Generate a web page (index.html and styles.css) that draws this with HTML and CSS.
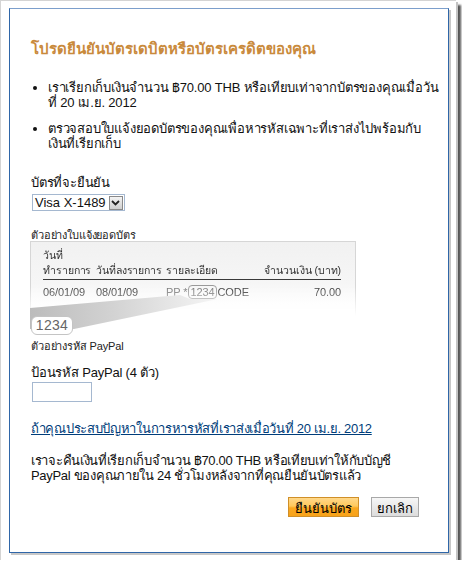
FILE: index.html
```html
<!DOCTYPE html>
<html>
<head>
<meta charset="utf-8">
<link rel="stylesheet" href="styles.css">
</head>
<body>
<div class="frame">
  <div class="card">
    <h1 class="title">โปรดยืนยันบัตรเดบิตหรือบัตรเครดิตของคุณ</h1>
    <ul class="bullets">
      <li>เราเรียกเก็บเงินจำนวน ฿70.00 THB หรือเทียบเท่าจากบัตรของคุณเมื่อวัน<br>ที่ 20 เม.ย. 2012</li>
      <li>ตรวจสอบใบแจ้งยอดบัตรของคุณเพื่อหารหัสเฉพาะที่เราส่งไปพร้อมกับ<br>เงินที่เรียกเก็บ</li>
    </ul>
    <div class="field card-field">
      <label class="label">บัตรที่จะยืนยัน</label>
      <div class="select">
        <span class="select-text">Visa X-1489</span>
        <span class="select-btn">
          <svg width="9" height="6" viewBox="0 0 9 6"><path d="M1 1 L4.5 4.5 L8 1" fill="none" stroke="#222" stroke-width="1.8"/></svg>
        </span>
      </div>
    </div>
    <div class="sample">
      <div class="small">ตัวอย่างใบแจ้งยอดบัตร</div>
      <div class="callout">
        <div class="statement">
          <div class="st-head">
            <div class="c1">วันที่<br>ทำรายการ</div>
            <div class="c2">วันที่ลงรายการ</div>
            <div class="c3">รายละเอียด</div>
            <div class="c4">จำนวนเงิน (บาท)</div>
          </div>
          <div class="st-row">
            <div class="c1">06/01/09</div>
            <div class="c2">08/01/09</div>
            <div class="c3"><span class="pp">PP *</span><span class="code-sm">1234</span><span class="code-word">CODE</span></div>
            <div class="c4">70.00</div>
          </div>
        </div>
        <svg class="wedge" width="200" height="95" viewBox="0 0 200 95">
          <defs>
            <linearGradient id="wg" x1="0" y1="0" x2="1" y2="0">
              <stop offset="0" stop-color="#bcbcbc"/>
              <stop offset="0.45" stop-color="#d3d3d3"/>
              <stop offset="1" stop-color="#f6f6f6"/>
            </linearGradient>
          </defs>
          <polygon points="0,67 150,54 160,58 188,58 44,88 0,88" fill="url(#wg)"/>
        </svg>
        <div class="code-lg">1234</div>
      </div>
      <div class="small code-caption">ตัวอย่างรหัส PayPal</div>
    </div>
    <div class="field code-field">
      <label class="label">ป้อนรหัส PayPal (4 ตัว)</label>
      <div class="input"></div>
    </div>
    <a class="link" href="#">ถ้าคุณประสบปัญหาในการหารหัสที่เราส่งเมื่อวันที่ 20 เม.ย. 2012 </a>
    <p class="refund">เราจะคืนเงินที่เรียกเก็บจำนวน ฿70.00 THB หรือเทียบเท่าให้กับบัญชี<br>PayPal ของคุณภายใน 24 ชั่วโมงหลังจากที่คุณยืนยันบัตรแล้ว</p>
    <div class="actions">
      <button class="btn primary">ยืนยันบัตร</button>
      <button class="btn">ยกเลิก</button>
    </div>
  </div>
</div>
</body>
</html>
```
FILE: styles.css
```css
html, body { margin: 0; padding: 0; background: #fff; }
body { font-family: "Liberation Sans", Arial, sans-serif; color: #111; }
.frame {
  width: 456px; height: 560px;
  border-top: 1px solid #d4d4d4; border-left: 1px solid #d4d4d4;
  background: #fff;
  box-shadow: 2px 2px 0 #c4c4c4, 5px 5px 2px #555;
  padding: 7px 0 0 8px;
  box-sizing: border-box;
}
.card {
  width: 440px; height: 545px; box-sizing: border-box;
  border: 1px solid #2f66a8; border-top-color: #7c9fcc;
  box-shadow: 2px 2px 0 #c8c8c8;
  padding: 30px 12px 0 21px;
}
.title {
  margin: 0 0 21px 0; font-size: 15px; font-weight: bold;
  color: #c98a3c; line-height: 20px;
}
.bullets {
  margin: 0; padding: 0 0 0 17px; font-size: 13px; line-height: 15px;
  white-space: nowrap; letter-spacing: -0.2px;
}
.bullets li { margin-bottom: 11px; }
.bullets li:last-child { margin-bottom: 0; }
.field { margin-top: 24px; }
.label { display: block; font-size: 13px; line-height: 15px; letter-spacing: -0.2px; }
.select {
  display: inline-flex; align-items: center; margin-top: 4px; margin-left: 1px;
  border: 1px solid #a5b8d0; height: 15px; font-size: 13px; background: #fff;
}
.select-text { padding: 0 3px 0 2px; line-height: 15px; }
.select-btn {
  width: 12px; height: 12px; margin-right: 1px; border: 1px solid #8a8a8a;
  background: linear-gradient(#f4f4f4, #cfcfcf);
  display: flex; align-items: center; justify-content: center;
}
.sample { margin-top: 17px; }
.small { font-size: 11px; line-height: 14px; color: #222; letter-spacing: -0.15px; }
.callout { position: relative; margin-top: -1px; margin-left: -1px; }
.statement {
  width: 326px; height: 75px; box-sizing: border-box;
  border: 1px solid #d6d6d6; border-bottom: none;
  background: linear-gradient(#f1f1f1, #f6f6f6 55%, #fff 100%);
  padding: 6px 14px 0 12px; font-size: 10.5px; color: #333; letter-spacing: -0.1px;
  -webkit-mask-image: linear-gradient(#000 60%, transparent);
  mask-image: linear-gradient(#000 60%, transparent);
}
.st-head, .st-row { display: flex; align-items: flex-end; white-space: nowrap; }
.st-head { border-bottom: 1px solid #3a3a3a; padding-bottom: 1px; line-height: 15px; }
.st-row { padding-top: 5px; line-height: 14px; font-size: 11px; }
.c1 { width: 53px; flex: none; }
.c2 { width: 70px; flex: none; }
.c3 { flex: 1; display: flex; align-items: center; }
.c4 { text-align: right; }
.pp { color: #777; margin-right: 1px; }
.code-sm {
  border: 1px solid #999; border-radius: 4px; padding: 0 1px; color: #777; line-height: 12px;
}
.code-word { margin-left: 1px; }
.wedge { position: absolute; left: 0; top: 0; }
.code-lg {
  position: relative; display: inline-block; margin-top: -1px; margin-left: 1px;
  width: 42px; height: 19px; box-sizing: border-box;
  border: 1px solid #c4c4c4; border-radius: 6px; background: #fff;
  font-size: 14px; color: #666; text-align: center; line-height: 17px; letter-spacing: 0.3px;
}
.code-caption { margin-top: 4px; }
.code-field { margin-top: 12px; }
.input { margin-top: 2px; margin-left: 1px; width: 58px; height: 18px; border: 1px solid #a5b8d0; }
.link {
  display: inline-block; margin-top: 19px; font-size: 13px; color: #003d7a; line-height: 16px;
  letter-spacing: -0.3px;
}
.refund {
  margin: 16px 0 0 0; font-size: 13px; line-height: 15px; white-space: nowrap; letter-spacing: -0.3px;
}
.actions { display: flex; justify-content: flex-end; gap: 12px; margin-top: 14px; padding-right: 17px; }
.btn {
  font-family: "Liberation Sans", Arial, sans-serif; font-size: 13px; height: 20px; padding: 0 5px;
  border: 1px solid #a8a8a8; background: linear-gradient(#f6f6f6, #dcdcdc); color: #000;
}
.btn.primary {
  border-color: #d08f28; padding: 0 6px;
  background: linear-gradient(#ffd88a 0%, #ffc95c 45%, #faa81f 55%, #f7a21a 100%);
}
```
